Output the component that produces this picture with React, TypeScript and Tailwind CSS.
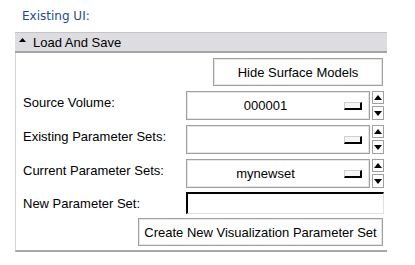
import React from "react";

const Spinner = () => (
  <div className="ml-[2px] flex w-[12px] flex-col gap-[2px]">
    <div className="flex h-[13px] items-center justify-center border border-[#a0a0a0] bg-white">
      <svg width="8" height="5" viewBox="0 0 8 5">
        <polygon points="0,5 8,5 4,0" fill="#000" />
      </svg>
    </div>
    <div className="flex h-[14px] items-center justify-center border border-[#a0a0a0] bg-white">
      <svg width="8" height="5" viewBox="0 0 8 5">
        <polygon points="0,0 8,0 4,5" fill="#000" />
      </svg>
    </div>
  </div>
);

const Select = ({ value }: { value: string }) => (
  <div className="flex">
    <div className="flex h-[29px] w-[184px] items-center border border-[#a0a0a0] bg-white shadow-[inset_0_0_0_1px_#e6e6e6]">
      <div className="flex-1 text-center text-[13px] leading-[15px] text-black">{value}</div>
      <div className="mr-[7px] h-[8px] w-[18px] border-t border-l border-b-2 border-r-2 border-t-[#d0d0d0] border-l-[#d0d0d0] border-b-black border-r-black bg-[#f6f6f6]" />
    </div>
    <Spinner />
  </div>
);

const Row = ({ label, children }: { label: string; children: React.ReactNode }) => (
  <div className="flex">
    <div className="w-[170px] pl-[7px] pt-[4px] text-[13px] leading-[15px] text-black">{label}</div>
    {children}
  </div>
);

export default function App() {
  return (
    <div
      className="h-[265px] w-[415px] bg-white"
      style={{ fontFamily: '"Liberation Sans", Arial, sans-serif' }}
    >
      <div
        className="pl-[22px] pt-[9px] text-[12px] leading-[14px] text-[#1f4a8e]"
        style={{ fontFamily: '"DejaVu Sans", Verdana, sans-serif' }}
      >
        Existing UI:
      </div>
      <div className="ml-[15px] mt-[9px] flex h-[21px] w-[372px] items-center border-t border-b-2 border-t-[#c4c4c4] border-b-[#a4a4a4] bg-[#dcdce1]">
        <svg className="ml-[4px] mb-[5px]" width="7" height="4" viewBox="0 0 7 4">
          <polygon points="0,4 7,4 3.5,0" fill="#000" />
        </svg>
        <span className="ml-[7px] text-[13px] leading-[15px] text-black">Load And Save</span>
      </div>
      <div className="ml-[15px] flex w-[372px] flex-col gap-[5px] border-l border-b-2 border-l-[#d4d4d4] border-b-[#a8a8a8] pt-[5px] pb-[4px]">
        <div className="flex justify-end pr-[4px]">
          <button className="h-[28px] w-[170px] border border-[#a0a0a0] bg-white text-[13px] leading-[15px] text-black shadow-[inset_0_0_0_1px_#e6e6e6]">
            Hide Surface Models
          </button>
        </div>
        <Row label="Source Volume:">
          <Select value="000001" />
        </Row>
        <Row label="Existing Parameter Sets:">
          <Select value="" />
        </Row>
        <Row label="Current Parameter Sets:">
          <Select value="mynewset" />
        </Row>
        <div className="-mt-[1px] flex">
          <div className="w-[170px] pl-[7px] pt-[4px] text-[13px] leading-[15px] text-black">New Parameter Set:</div>
          <div className="h-[22px] w-[198px] border-t-2 border-l-2 border-r border-b border-t-black border-l-black border-r-[#e0e0e0] border-b-[#e0e0e0] bg-white" />
        </div>
        <div className="-mt-[1px] flex justify-end pr-[4px]">
          <button className="h-[28px] w-[245px] border border-[#a0a0a0] bg-white text-[13px] leading-[15px] text-black shadow-[inset_0_0_0_1px_#e6e6e6]">
            Create New Visualization Parameter Set
          </button>
        </div>
      </div>
    </div>
  );
}
